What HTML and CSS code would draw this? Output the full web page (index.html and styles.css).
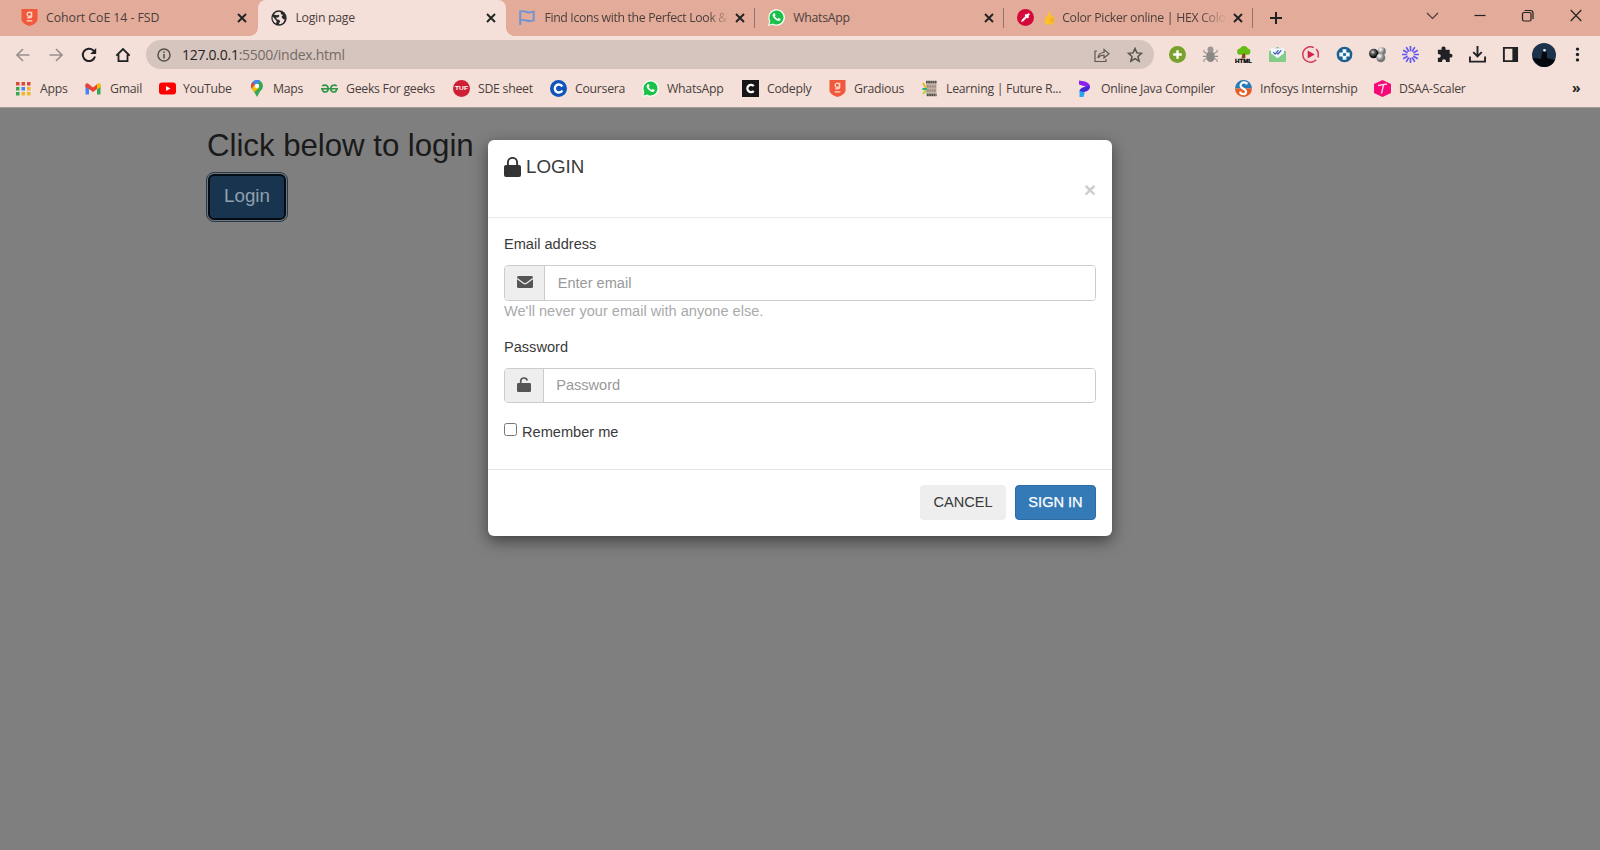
FILE: index.html
```html
<!DOCTYPE html>
<html lang="en">
<head>
<meta charset="utf-8">
<title>Login page</title>
<link rel="stylesheet" href="styles.css">
</head>
<body>
<svg class="defs" width="0" height="0">
  <symbol id="x" viewBox="0 0 10 10"><path d="M1 1l8 8M9 1L1 9" stroke="#222" stroke-width="1.9" fill="none"/></symbol>
  <symbol id="shield" viewBox="0 0 17 18"><path d="M0 0h17v11q0 4-8.500 7Q0 15 0 11z" fill="#f0593b"/><g fill="none" stroke="#ffd9cc" stroke-width="1.300"><circle cx="8.300" cy="5.500" r="2.300"/><path d="M10.800 2.800v5q0 1.500-2.500 1.500H6M5.500 12.500h6"/></g></symbol>
  <symbol id="wa" viewBox="0 0 17 17"><path d="M0 17l1.200-4.700A8.300 8.300 0 1 1 4.600 15.800z" fill="#f3fff3"/><path d="M1.500 15.500l.9-3.500A7 7 0 1 1 5 14.600z" fill="#19c04a"/><path d="M5.700 4.300q.7-.6 1.200.2l.7 1.500-.8 1.200q.9 1.800 2.800 2.700l1-1 1.800.9q.5.4 0 1.200-1.300 1.700-4 .3-3-1.500-3.800-4.500-.2-1.700 1.100-2.500z" fill="#fff"/></symbol>
</svg>

<header class="browser">
  <div class="tabstrip">
    <div class="tab"><span class="fav"><svg width="17" height="17"><use href="#shield"/></svg></span><span class="tt t1">Cohort CoE 14 - FSD</span><svg class="close"><use href="#x"/></svg></div>
    <div class="tab active"><span class="fav"><svg width="16" height="16" viewBox="0 0 16 16"><circle cx="8" cy="8" r="7.700" fill="#27282b"/><path d="M9.500 2Q5 1 2.800 4.500l3 .8 1.700-.5 1 1.200-1.500 1.500H5.200l.5 1.700 2 .5 1.500 1.300-1.500 3.200q4.500 0 6-4.500l-2.200-1.200-1-1.800 1.500-1.800-2-.7z" fill="#f4e0d9"/><path d="M1.700 6.500Q1 11 5 13.500l.8-2.200z" fill="#f4e0d9"/></svg></span><span class="tt t2">Login page</span><svg class="close"><use href="#x"/></svg></div>
    <div class="tab"><span class="fav"><svg width="16" height="16" viewBox="0 0 16 16"><path d="M1.200 15V1.500q3.500-1 6 .5 3 1 7.500-.3v8.600q-4.500 1.400-7.500.2-3-1.300-6 0" fill="none" stroke="#6f93d4" stroke-width="1.900"/></svg></span><span class="tt t3">Find Icons with the Perfect Look &amp;</span><svg class="close"><use href="#x"/></svg></div>
    <div class="tab"><span class="fav"><svg width="17" height="17"><use href="#wa"/></svg></span><span class="tt t4">WhatsApp</span><svg class="close"><use href="#x"/></svg></div>
    <div class="tab"><span class="fav"><svg width="17" height="17" viewBox="0 0 17 17"><circle cx="8.500" cy="8.500" r="8.500" fill="#d4083a"/><path d="M4 13l.8-2.300L8.500 7 10 8.500 6.300 12.200z" fill="#fff"/><path d="M8.300 5.500l3.200 3.200M10 7l2.200-2.400" stroke="#fff" stroke-width="2"/></svg></span><span class="tt t5"><svg class="thumb" width="11" height="14" viewBox="0 0 11 14"><path d="M4.500 1q1.700-1 2 1L7 5.500h2.500q1.500.3 1 2l-.7 4.500q-.4 1.500-2 1.500H3q-2.500-.5-2.700-3Q.2 7 2.500 6 4.300 4.500 4.500 1z" fill="#fdc02c"/><path d="M6.500 8H10M6.500 10h3.300" stroke="#df9420" stroke-width=".8"/></svg>Color Picker online | HEX Colo</span><svg class="close"><use href="#x"/></svg></div>
    <div class="newtab"><svg width="14" height="14"><path d="M7 1v12M1 7h12" stroke="#222" stroke-width="2"/></svg></div>
    <div class="winctl">
      <svg width="48" height="30" viewBox="0 0 48 30"><path d="M19 13l5.500 5.500L30 13" fill="none" stroke="#4b3a35" stroke-width="1.200"/></svg>
      <svg width="48" height="30" viewBox="0 0 48 30"><path d="M18.500 15.500h11" stroke="#222" stroke-width="1.200"/></svg>
      <svg width="48" height="30" viewBox="0 0 48 30"><g fill="none" stroke="#222" stroke-width="1.200"><rect x="18.500" y="12.500" width="8.500" height="8.500" rx="1.500"/><path d="M20.500 10.500h6q2.500 0 2.500 2.500v6"/></g></svg>
      <svg width="48" height="30" viewBox="0 0 48 30"><path d="M18.700 10l10.600 11M29.300 10l-10.600 11" stroke="#222" stroke-width="1.200"/></svg>
    </div>
  </div>

  <div class="toolbar">
    <div class="nav">
      <svg viewBox="0 0 16 16"><path d="M14.500 8H2M8 2L2 8l6 6" fill="none" stroke="#97908d" stroke-width="1.700"/></svg>
      <svg viewBox="0 0 16 16"><path d="M1.500 8H14M8 2l6 6-6 6" fill="none" stroke="#97908d" stroke-width="1.700"/></svg>
      <svg viewBox="0 0 16 16"><path d="M14 9.500A6.200 6.200 0 1 1 12.300 3.400L14 5" fill="none" stroke="#202124" stroke-width="2"/><path d="M15.200 1v6H9.200z" fill="#202124"/></svg>
      <svg viewBox="0 0 16 16"><path d="M1.300 8.700L8 2l6.700 6.700M3.500 7.500v6.700h9V7.500" fill="none" stroke="#202124" stroke-width="1.800"/></svg>
    </div>
    <div class="omnibox">
      <svg width="14" height="14" viewBox="0 0 14 14"><circle cx="7" cy="7" r="6" fill="none" stroke="#55504e" stroke-width="1.500"/><path d="M7 6v4.500M7 3.400v1.500" stroke="#55504e" stroke-width="1.600"/></svg>
      <span class="url">127.0.0.1<i>:5500/index.html</i></span>
      <svg class="share" width="16" height="16" viewBox="0 0 16 16"><path d="M3 4H1v10.500h11V12M4 11q.5-5.500 6-5.500V2.500l5 4.300-5 4.200V8q-4 0-6 3z" fill="none" stroke="#5d5653" stroke-width="1.200"/></svg>
      <svg width="16" height="16" viewBox="0 0 16 16"><path d="M8 1.500l1.900 4.400 4.700.4-3.600 3.100 1.100 4.700L8 11.600l-4.100 2.500L5 9.400 1.400 6.300l4.700-.4z" fill="none" stroke="#55504e" stroke-width="1.500"/></svg>
    </div>
    <div class="exts">
      <svg viewBox="0 0 18 18"><circle cx="9" cy="9" r="9" fill="#79a12c"/><path d="M9 4.500v9M4.500 9h9" stroke="#fff" stroke-width="2.500"/></svg>
      <svg viewBox="0 0 18 18"><ellipse cx="9" cy="11" rx="4.600" ry="6" fill="#8b8886"/><circle cx="9" cy="3.800" r="3.200" fill="#9a9795"/><path d="M5 8L2 6V4M13 8l3-2V4M5 11H1M13 11h4M5 13l-3 2v2M13 13l3 2v2" stroke="#94908e" stroke-width="1.100" fill="none"/></svg>
      <svg viewBox="0 0 18 18"><path d="M8 7h3v6H7z" fill="#854718"/><g fill="#64bd14"><circle cx="9.500" cy="4" r="4"/><circle cx="5.500" cy="6" r="3.300"/><circle cx="13" cy="6" r="3.300"/></g><text class="html-mark" x="0" y="18" textLength="18" lengthAdjust="spacingAndGlyphs">HTML</text></svg>
      <svg viewBox="0 0 18 18"><path d="M0 6l9-5 9 5v9q0 2-2 2H2q-2 0-2-2z" fill="#69b873"/><path d="M2 2.500h14v8l-7 3-7-3z" fill="#f5f7ff"/><path d="M0 6l9 7 9-7v9q0 2-2 2H2q-2 0-2-2z" fill="#83cd89"/><path d="M4.500 6.500l2 2 3.500-4M8.500 7.500l1 1 3.500-4" fill="none" stroke="#4961ba" stroke-width="1.300"/></svg>
      <svg viewBox="0 0 18 18"><path d="M12.500 1.700A8.100 8.100 0 1 0 13 16M15 3.300q3.500 4 1.800 9M13 16l2-1.300" fill="none" stroke="#d43a5c" stroke-width="1.600"/><path d="M6 4.800l7.500 4.200L6 13.200z" fill="#d3234c"/></svg>
      <svg viewBox="0 0 18 18"><circle cx="9" cy="9" r="8.300" fill="#1d5f8e"/><path d="M7 3.500h4V7h3.500v4H11v3.500H7V11H3.500V7H7z" fill="#edf7fb"/><path d="M7.500 7.500h3v3h-3z" fill="#1d6e9e"/></svg>
      <svg viewBox="0 0 18 18"><defs><radialGradient id="g1" cx=".4" cy=".35"><stop offset="0" stop-color="#eee"/><stop offset=".35" stop-color="#777"/><stop offset="1" stop-color="#111"/></radialGradient><radialGradient id="g2" cx=".35" cy=".3"><stop offset="0" stop-color="#fff"/><stop offset="1" stop-color="#777"/></radialGradient></defs><circle cx="13.500" cy="5.500" r="4.300" fill="url(#g2)"/><circle cx="5" cy="8" r="5" fill="url(#g1)"/><circle cx="12.500" cy="12.500" r="4.800" fill="url(#g2)"/></svg>
      <svg viewBox="-9 -9 18 18"><g stroke="#6257f0" stroke-width="1.800"><path d="M0-9v5.500M0 3.500V9M-9 0h5.500M3.500 0H9"/><path transform="rotate(30)" d="M0-9v5.500M0 3.500V9M-9 0h5.500M3.500 0H9"/><path transform="rotate(60)" d="M0-9v5.500M0 3.500V9M-9 0h5.500M3.500 0H9"/></g></svg>
      <svg viewBox="0 0 18 18"><path d="M2 4h4q-.8-3.500 2-3.500T10 4h4.500v4.200q3-.5 3 2t-3 2V17h-4q.3-3-2-3t-2 3H2v-4.500q3 0 3-2t-3-2z" fill="#202124"/></svg>
      <svg viewBox="0 0 18 18"><path d="M1 11v5.500h16V11M9 0v10.500M4.500 6.500L9 11l4.500-4.500" fill="none" stroke="#202124" stroke-width="2"/></svg>
      <svg viewBox="0 0 18 18"><path d="M1 1h16v16H1zM3 3v12h8V3z" fill="#202124" fill-rule="evenodd"/></svg>
      <svg class="avatar" viewBox="0 0 24 24"><circle cx="12" cy="12" r="12" fill="#1d324b"/><path d="M.5 15q5 0 8.500 1l1-6 1-2.500 2-.5 1.500 2 .5 6q4 1 8 2-3 7-10.500 7T.5 15z" fill="#05090d"/><circle cx="12.500" cy="7.300" r="1.400" fill="#d5e6ed"/></svg>
      <svg viewBox="0 0 18 18"><g fill="#202124"><circle cx="9" cy="3.300" r="1.800"/><circle cx="9" cy="9" r="1.800"/><circle cx="9" cy="14.700" r="1.800"/></g></svg>
    </div>
  </div>

  <nav class="bookmarks">
    <a><svg viewBox="0 0 17 17"><g fill="#d84a3a"><path d="M1 2h3.500v3.500H1zM6.500 2H10v3.500H6.500zM12 2h3.500v3.500H12z"/></g><path d="M1 7h3.500v3.500H1z" fill="#35a853"/><path d="M6.500 7H10v3.500H6.500z" fill="#4285f4"/><path d="M12 7h3.500v3.500H12zM6.500 12H10v3.500H6.500zM12 12h3.500v3.500H12z" fill="#eeb728"/><path d="M1 12h3.500v3.500H1z" fill="#35a853"/></svg><span>Apps</span></a>
    <a><svg viewBox="0 0 17 17"><path d="M.5 4.500V14.500H4V7z" fill="#4285f4"/><path d="M15.500 4.500v10H12V7z" fill="#34a853"/><path d="M.5 4.500Q1 2.500 3 3.500l5 4 5-4 1 1v3l-6 4.500-4-3V9L.5 7z" fill="#ea4335"/><path d="M12 4.500q3-2.500 3.500 0V7L12 9.500z" fill="#fbbc04"/></svg><span>Gmail</span></a>
    <a><svg viewBox="0 0 17 17"><rect y="2.500" width="17" height="12" rx="3" fill="#f00"/><path d="M7 6v5l4.500-2.500z" fill="#fff"/></svg><span class="flush">YouTube</span></a>
    <a><svg viewBox="0 0 17 17"><path d="M9 0A6 6 0 0 0 3 6q0 3 3 5.500l3 5.500 3-5.500Q15 9 15 6a6 6 0 0 0-6-6z" fill="#34a853"/><path d="M3.500 8.500L12.500 1A6 6 0 0 0 3.700 3.500z" fill="#4285f4"/><path d="M4.500 2.200L7 4.500 3.500 8.600Q2 5 4.500 2.200z" fill="#ea4335"/><path d="M3.500 8.500L7 4.500l4 3.500-5 4z" fill="#fbbc04"/><circle cx="9" cy="6" r="2.200" fill="#fff"/></svg><span>Maps</span></a>
    <a><svg viewBox="0 0 17 17"><g fill="none" stroke="#2f9547" stroke-width="1.600"><path d="M0 8.800h17M1.200 6q1.500-1.300 3.700-.7 2.300.7 2.300 3.500 0 3-2.800 3.200-2.700 0-3.200-3.200M15.800 6q-1.500-1.300-3.700-.7-2.300.7-2.300 3.500 0 3 2.800 3.200 2.700 0 3.200-3.200"/></g></svg><span>Geeks For geeks</span></a>
    <a><svg viewBox="0 0 17 17"><circle cx="8.500" cy="8.500" r="8.500" fill="#cf1f35"/><text class="tuf" x="2" y="10.300" textLength="13" lengthAdjust="spacingAndGlyphs">TUF</text></svg><span>SDE sheet</span></a>
    <a><svg viewBox="0 0 17 17"><circle cx="8.500" cy="8.500" r="8.500" fill="#1155bb"/><path d="M12.300 6.500a4 4 0 1 0 0 4" fill="none" stroke="#fff" stroke-width="2.400"/></svg><span>Coursera</span></a>
    <a><svg viewBox="0 0 17 17"><use href="#wa"/></svg><span>WhatsApp</span></a>
    <a><svg viewBox="0 0 17 17"><path d="M0 0h17v17H0z" fill="#161616"/><path d="M11.800 6a3.700 3.700 0 1 0 0 5" fill="none" stroke="#fff" stroke-width="2.200"/></svg><span>Codeply</span></a>
    <a><svg viewBox="0 0 17 17"><use href="#shield" width="17" height="17"/></svg><span>Gradious</span></a>
    <a><svg viewBox="0 0 17 17"><path d="M5 1h10.500v15H5z" fill="#c0b1a4"/><path d="M5 2h10.500M6 15h9.500" stroke="#50504a" stroke-width="2.500" stroke-dasharray="1.700 .5"/><path d="M6 6.500h9.500M6 10.500h9.500" stroke="#94887c" stroke-width="2.200" stroke-dasharray="1.700 .7"/><path d="M2 3l3 5" stroke="#e6b92a" stroke-width="2"/><path d="M1.500 9H6" stroke="#1fad82" stroke-width="2"/><path d="M2 14l3-4" stroke="#bbcf32" stroke-width="2"/></svg><span>Learning | Future R...</span></a>
    <a><svg viewBox="0 0 17 17"><path d="M3 .5l6 1q5 2 5 5 0 3-4 4.500L7 9l2.500-2.500L3 4.500z" fill="#8b20ef"/><path d="M3.500 10l5-2v5.500L7.500 17h-4z" fill="#2aa5ed"/><path d="M3.500 11q1-3.500 5-4 3-.3 5.300-1Q14 11 8 12z" fill="#4526d5"/></svg><span>Online Java Compiler</span></a>
    <a><svg viewBox="0 0 17 17"><path d="M0 8.500a8.500 8.500 0 0 1 17 0z" fill="#287bb5"/><path d="M0 8.500a8.500 8.500 0 0 0 17 0z" fill="#e35d28"/><path d="M11.500 4.500V3Q7.500 1.500 6 4t2 4.500q4.500 2.500 2.500 5-2 1.500-5-.3V11.500" fill="none" stroke="#fff" stroke-width="2.200"/></svg><span>Infosys Internship</span></a>
    <a><svg viewBox="0 0 17 17"><path d="M8.500 0L17 4v9l-8.500 4L0 13V4z" fill="#f50a78"/><path d="M4 5.500l9-1.500M9.500 5l-2 8.500" stroke="#ffd2e5" stroke-width="1.300"/></svg><span>DSAA-Scaler</span></a>
    <b class="more">»</b>
  </nav>
</header>

<main class="page">
  <h2>Click below to login</h2>
  <button class="open">Login</button>

  <section class="modal">
    <div class="mhead">
      <h4><svg width="17" height="20" viewBox="0 0 17 20"><path d="M3.900 9V5.500a4.600 4.600 0 0 1 9.200 0V9" fill="none" stroke="#333" stroke-width="1.900"/><rect y="8" width="17" height="12" rx="2" fill="#333"/></svg>LOGIN</h4>
      <span class="dismiss">×</span>
    </div>
    <form class="mbody">
      <label>Email address</label>
      <div class="group g-email"><span class="addon"><svg width="16" height="12" viewBox="0 0 16 12"><rect width="16" height="12" rx="1.500" fill="#555"/><path d="M0 2.500l6.500 4.700q1.500 1 3 0L16 2.500" fill="none" stroke="#eee" stroke-width="1.300"/></svg></span><input type="text" placeholder="Enter email"></div>
      <small>We'll never your email with anyone else.</small>
      <label class="pw">Password</label>
      <div class="group g-pass"><span class="addon"><svg width="14" height="15" viewBox="0 0 14 15"><path d="M3.700 7V4.300a3.300 3.300 0 0 1 6.500-.8" fill="none" stroke="#555" stroke-width="1.700"/><rect y="6" width="14" height="9" rx="1.300" fill="#555"/></svg></span><input type="text" placeholder="Password"></div>
      <div class="check"><i></i><span>Remember me</span></div>
    </form>
    <div class="mfoot"><span class="btn cancel">CANCEL</span><span class="btn signin">SIGN IN</span></div>
  </section>
</main>
</body>
</html>
```
FILE: styles.css
```css
* { box-sizing: border-box; }
body { margin: 0; width: 1600px; height: 850px; overflow: hidden; display: flex; flex-direction: column; background: #7f7f7f; font: 14.58px/20.83px "Liberation Sans", Arial, sans-serif; color: #3a3a3a; }
.defs { position: absolute; }
svg { display: block; flex: none; }

.browser { height: 108px; background: #f4e0d9; border-bottom: 1px solid #a79b97; font-family: "Open Sans", "Noto Sans", sans-serif; font-size: 12.3px; letter-spacing: -.3px; color: #4a3f3c; flex: none; }
.tabstrip { height: 36px; background: #e3ab99; display: grid; grid-template-columns: 249.500px repeat(4, 248.9px) 46px 1fr; padding-left: 8px; }
.tab { display: flex; align-items: center; height: 36px; padding: 0 10.500px 1px 13px; position: relative; white-space: nowrap; }
.fav { width: 17px; margin-right: 8px; }
.tt { flex: 1; overflow: hidden; margin-right: 6px; line-height: 20px; padding-top: 1px; }
.t1 { letter-spacing: -.05px; }
.t3, .t5 { -webkit-mask-image: linear-gradient(to right, #000 164px, transparent 186px); mask-image: linear-gradient(to right, #000 164px, transparent 186px); }
.t3 { letter-spacing: -.35px; }
.t5 { display: flex; align-items: center; margin-left: 2px; -webkit-mask-image: linear-gradient(to right, #000 156px, transparent 182px); mask-image: linear-gradient(to right, #000 156px, transparent 182px); }
.thumb { margin-right: 7px; }
.close { width: 10px; height: 10px; }
.active { background: #f4e0d9; border-radius: 8px 8px 0 0; }
.active::before, .active::after { content: ""; position: absolute; bottom: 0; width: 8px; height: 8px; }
.active::before { left: -8px; background: radial-gradient(circle at 0 0, #e3ab99 7.5px, #f4e0d9 8px); }
.active::after { right: -8px; background: radial-gradient(circle at 100% 0, #e3ab99 7.5px, #f4e0d9 8px); }
.tab:nth-child(n+3)::after { content: ""; position: absolute; right: 0; top: 8px; width: 1px; height: 20px; background: #94716a; }
.newtab { padding: 10.500px 0 0 16px; }
.winctl { display: flex; justify-content: flex-end; }

.toolbar { height: 36px; display: grid; grid-template-columns: 146px 1008px 1fr; align-items: center; }
.nav { display: grid; grid-template-columns: repeat(4, 33.4px); padding-left: 6px; justify-items: center; padding-top: 1px; }
.nav svg { width: 16px; height: 16px; }
.omnibox { height: 29px; border-radius: 15px; background: #d6c5be; display: flex; align-items: center; padding: 0 11px 0 11px; margin-top: 1px; }
.url { flex: 1; margin-left: 11px; padding-top: 1px; font-size: 14px; letter-spacing: -.27px; color: #292321; }
.url i { font-style: normal; color: #756b67; }
.share { margin-right: 17px; }
.exts { display: grid; grid-template-columns: repeat(13, 33.4px); justify-items: center; align-items: center; padding: 1px 0 0 6.400px; }
.exts svg { width: 17px; height: 17px; }
.exts .avatar { width: 24px; height: 24px; }
.html-mark { font: 900 6px "Liberation Sans", sans-serif; letter-spacing: 0; fill: #000; stroke: #000; stroke-width: .3px; }
.tuf { font: bold 5px "Liberation Sans", sans-serif; letter-spacing: 0; fill: #fff; }

.bookmarks { height: 33px; display: grid; grid-template-columns: 70px 74px 89px 73px 132px 97px 92px 100px 87px 92px 155px 159px 139px 198px 1fr; padding-left: 15px; padding-top: 1px; align-items: center; white-space: nowrap; letter-spacing: -.28px; }
.bookmarks a { display: flex; align-items: center; gap: 8px; }
.bookmarks svg { width: 17px; height: 17px; }
.flush { margin-left: -1px; }
.more { font-size: 14px; line-height: 14px; color: #222; margin-top: -3px; }

.page { flex: 1; position: relative; padding: 21px 207px; }
h2 { margin: 0 0 11px; font-size: 31.25px; font-weight: 400; line-height: 34px; letter-spacing: -.04px; color: #1a1a1a; }
.open { width: 78px; height: 46px; margin-left: 1px; border: 2px solid #040d16; border-radius: 6px; outline: 1px solid #263849; outline-offset: 1px; background: #19344e; color: #8fa0ae; font: 18.75px "Liberation Sans", Arial, sans-serif; padding: 0 0 2px; display: block; box-shadow: 0 0 0 1px #70757a; }

.modal { position: absolute; left: 488px; top: 32px; width: 624px; height: 396px; background: #fff; border-radius: 6px; box-shadow: 0 5px 16px rgba(0,0,0,.5); display: flex; flex-direction: column; }
.mhead { height: 78px; border-bottom: 1px solid #e9e9e9; padding: 17px 16px 0; display: flex; flex-direction: column; }
h4 { margin: 0; display: flex; gap: 5px; font-size: 18.75px; font-weight: 400; line-height: 20px; }
.dismiss { align-self: flex-end; font-size: 20.5px; font-weight: 700; line-height: 22px; color: #ccc; margin-top: 2px; }
.mbody { flex: 1; padding: 15.500px 16px 0; display: flex; flex-direction: column; }
.group { display: flex; height: 36px; border: 1px solid #ccc; border-radius: 4px; overflow: hidden; margin-top: 11px; flex: none; }
.addon { width: 40px; background: #eee; border-right: 1px solid #ccc; display: grid; place-items: center; padding-bottom: 2px; }
.g-pass { height: 35px; margin-top: 9.500px; }
.g-pass .addon { width: 38.500px; padding-bottom: 1px; }
input { flex: 1; border: 0; outline: 0; padding: 0 12.700px 0; font: inherit; background: #fff; }
input::placeholder { color: #999; opacity: 1; }
small { font-size: 14.58px; color: #a8aaac; line-height: 20px; }
.pw { margin-top: 16px; }
.g-pass input { padding-top: 1px; }
.check { display: flex; align-items: center; gap: 5px; margin-top: 18px; }
.check i { width: 13px; height: 13px; border: 1px solid #767676; border-radius: 2.500px; margin-bottom: 4px; }
.check span { padding-top: 1px; }
.mfoot { height: 67px; border-top: 1px solid #e5e5e5; padding: 15px 16px 0; display: flex; justify-content: flex-end; gap: 9px; flex: none; }
.btn { height: 35px; line-height: 34px; border-radius: 4px; text-align: center; }
.cancel { width: 86px; background: #eee; }
.signin { width: 81px; background: #337ab7; border: 1px solid #2e6da4; line-height: 32px; color: #fff; -webkit-text-stroke: .25px #fff; }
```
